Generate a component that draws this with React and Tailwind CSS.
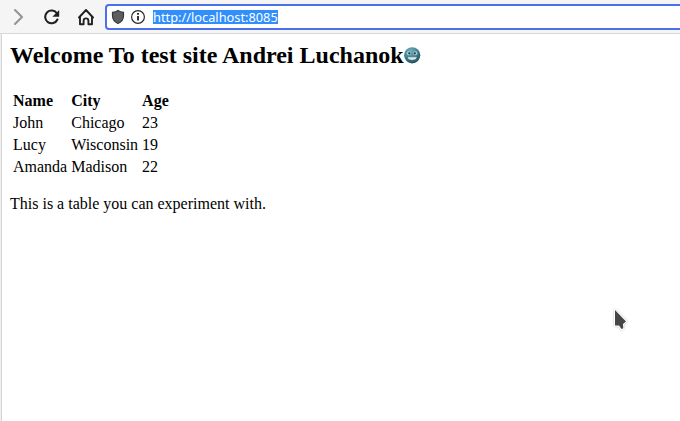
const columns = ["Name", "City", "Age"];
const rows = [["John", "Chicago", "23"], ["Lucy", "Wisconsin", "19"], ["Amanda", "Madison", "22"]];

function NavigationIcons() {
  return (
    <svg width="105" height="33" viewBox="0 0 105 33" fill="none" className="shrink-0" strokeWidth="2.100" strokeLinecap="round" strokeLinejoin="round">
      <path d="M15 10l7 7-7 7" stroke="#949496" />
      <path d="M57 13.500a6.400 6.400 0 1 0 .4 6" stroke="#202023" />
      <path d="M59.200 10v6.800h-6.800z" fill="#202023" />
      <path d="M79 17.500l7-7.500 7 7.500M80 16.500v7.800h3.600v-3.500a2.400 2.400 0 0 1 4.800 0v3.500h3.600v-7.800" stroke="#202023" strokeWidth="1.900" />
    </svg>
  );
}

function AddressIcons() {
  return (
    <svg width="46" height="22" viewBox="0 0 46 22" fill="none" className="shrink-0">
      <path d="M11 4.500c1.800 1.300 3.600 1.700 5.500 1.800v3.500c0 3.500-2 6.200-5.500 7.700-3.500-1.500-5.500-4.200-5.500-7.700v-3.500c1.900-.1 3.700-.5 5.500-1.800z" fill="#5e5e60" stroke="#38383b" strokeWidth="1.200" />
      <circle cx="31" cy="11" r="6.400" stroke="#29292c" strokeWidth="1.200" />
      <path d="M31 10v4.500M31 7v1.700" stroke="#29292c" strokeWidth="1.900" />
    </svg>
  );
}

function Face() {
  return (
    <svg width="17" height="17" viewBox="0 0 17 17" className="mt-[5px]">
      <defs>
        <radialGradient id="face" cx="40%" cy="25%" r="75%">
          <stop offset="0" stopColor="#72aebb" />
          <stop offset=".55" stopColor="#468491" />
          <stop offset="1" stopColor="#23505d" />
        </radialGradient>
      </defs>
      <circle cx="8.200" cy="8.300" r="8.100" fill="url(#face)" />
      <circle cx="4.800" cy="6.300" r="2" fill="#a8ced6" />
      <circle cx="11.300" cy="6.300" r="2" fill="#a8ced6" />
      <circle cx="5.300" cy="6.300" r="1.100" fill="#17363f" />
      <circle cx="10.800" cy="6.300" r="1.100" fill="#17363f" />
      <path d="M3.500 9.800h9.300v1.500q-1 2-4.600 2t-4.700-2z" fill="#d5e9ed" stroke="#245460" strokeWidth=".5" />
    </svg>
  );
}

export default function App() {
  return (
    <div className="relative flex h-[421px] w-[680px] flex-col overflow-hidden bg-white text-black">
      <header className="flex h-[34px] shrink-0 items-center border-b border-[#d8d8d8] bg-[#f5f5f5]">
        <NavigationIcons />
        <div className="mt-px flex h-[26px] w-[590px] shrink-0 items-center rounded-[4px] border-2 border-[#4b70eb] bg-white">
          <AddressIcons />
          <span className="h-[14px] w-[125px] whitespace-nowrap bg-[#308ffc] font-['Noto_Sans',sans-serif] text-[12.8px] leading-[15px] text-white">http://localhost:8085</span>
        </div>
      </header>
      <div className="flex grow bg-[#f0f0f0] pl-px">
        <main className="grow border-l border-[#d4d4d4] bg-white pl-2 pt-2 font-['Liberation_Serif',serif] text-[16px] leading-[18px]">
          <h2 className="flex h-[27px] text-[24px] font-bold leading-[27px]">Welcome To test site Andrei Luchanok<Face /></h2>
          <table className="mt-5 border-separate border-spacing-[2px]">
            <thead><tr>{columns.map(name => <th key={name} className="p-px text-left">{name}</th>)}</tr></thead>
            <tbody>{rows.map(row => <tr key={row[0]}>{row.map(value => <td key={value} className="p-px">{value}</td>)}</tr>)}</tbody>
          </table>
          <p className="mt-4">This is a table you can experiment with.</p>
        </main>
      </div>
      <svg width="20" height="26" viewBox="0 0 20 26" className="absolute left-[611px] top-[306px] drop-shadow-[0_0_1px_rgba(0,0,0,0.25)]">
        <path d="M4 4v15.500h4l2.500 3.500 1.800-.7-.3-4.300 3-2.500z" fill="#464646" stroke="white" strokeWidth="2" strokeLinejoin="round" paintOrder="stroke" />
      </svg>
    </div>
  );
}
